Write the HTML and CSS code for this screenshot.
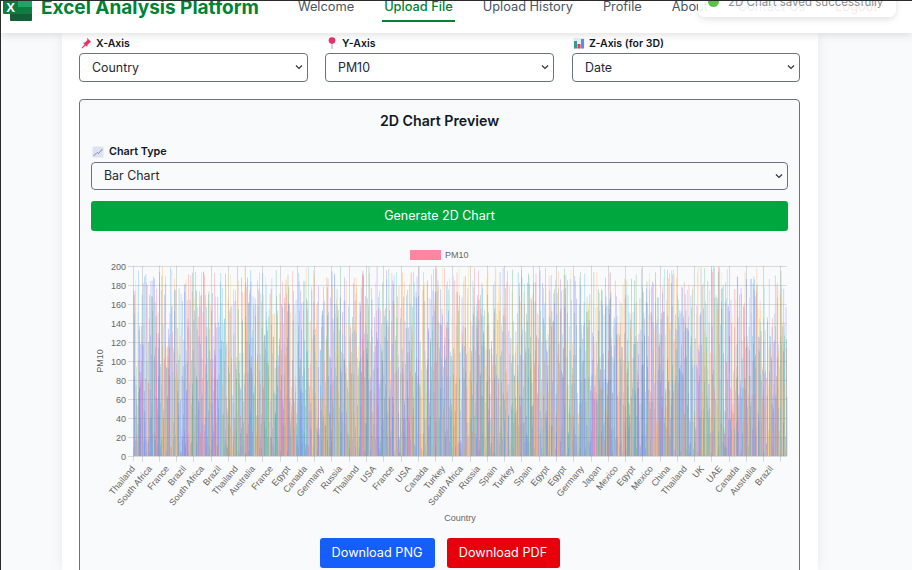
FILE: index.html
```html
<!DOCTYPE html>
<html lang="en">
<head>
<meta charset="utf-8">
<title>Excel Analysis Platform</title>
<link rel="stylesheet" href="styles.css">
</head>
<body>
<div class="page">
  <header class="topbar">
    <div class="brand">
      <svg class="logo" viewBox="0 0 30 33" aria-hidden="true">
        <rect x="7" y="0" width="22" height="19" fill="#21a366"/>
        <rect x="7" y="19" width="22" height="7" fill="#107c41"/>
        <path d="M7 26h22v6a1 1 0 0 1-1 1H8a1 1 0 0 1-1-1z" fill="#185c37"/>
        <rect x="0" y="0" width="15" height="26" rx="1" fill="#0f7b3f"/>
        <text x="7.5" y="24" class="logo-x">X</text>
      </svg>
      <span class="brand-name">Excel Analysis Platform</span>
    </div>
    <nav class="nav">
      <a class="nav-link">Welcome</a>
      <a class="nav-link active">Upload File</a>
      <a class="nav-link">Upload History</a>
      <a class="nav-link">Profile</a>
      <a class="nav-link">About</a>
      <a class="nav-link">Contact Us</a>
      <a class="nav-link logout">Logout</a>
    </nav>
  </header>
  <div class="toast">
    <span class="toast-dot"></span>
    <span class="toast-text">2D Chart saved successfully</span>
  </div>
  <main class="card">
    <div class="axis-row">
      <div class="field">
        <label class="field-label">
          <svg class="ico" viewBox="0 0 12 12" aria-hidden="true"><path d="M7 .8l4.2 4.2-1.3.5-2.4 2.4-.3 2-1.6-1.5-3.4 3-.6-.6 3-3.4L3 5.8l2-.3 2.4-2.4z" fill="#e8336b"/></svg>
          X-Axis
        </label>
        <select class="select"><option>Country</option></select>
      </div>
      <div class="field">
        <label class="field-label">
          <svg class="ico" viewBox="0 0 12 12" aria-hidden="true"><rect x="5.6" y="5" width=".9" height="7" fill="#9aa0a6"/><circle cx="6" cy="3.6" r="3.3" fill="#e8336b"/></svg>
          Y-Axis
        </label>
        <select class="select"><option>PM10</option></select>
      </div>
      <div class="field field-last">
        <label class="field-label">
          <svg class="ico" viewBox="0 0 12 12" aria-hidden="true"><rect x=".5" y="1" width="11" height="10.5" fill="#e9edf2"/><rect x="1" y="4" width="3" height="7.5" fill="#2f9e8f"/><rect x="4.5" y="7" width="3" height="4.5" fill="#e8336b"/><rect x="8" y="2" width="3" height="9.5" fill="#5b8def"/></svg>
          Z-Axis (for 3D)
        </label>
        <select class="select"><option>Date</option></select>
      </div>
    </div>
    <section class="panel">
      <h2 class="panel-title">2D Chart Preview</h2>
      <label class="field-label field-label-wide">
        <svg class="ico" viewBox="0 0 12 12" aria-hidden="true"><rect x=".5" y=".5" width="11" height="11" fill="#dfe1ee"/><path d="M1.5 10L5 6.5l1.5 1L10.5 3" fill="none" stroke="#6d8fd0" stroke-width="1"/></svg>
        Chart Type
      </label>
      <select class="select select-plain"><option>Bar Chart</option></select>
      <button class="btn btn-green btn-wide">Generate 2D Chart</button>
      <div class="chart" id="chart"></div>
      <div class="actions">
        <button class="btn btn-blue">Download PNG</button>
        <button class="btn btn-red">Download PDF</button>
      </div>
    </section>
  </main>
</div>
<script src="chart.js"></script>
</body>
</html>
```
FILE: styles.css
```css
* { box-sizing: border-box; }
html, body { margin: 0; padding: 0; height: 100%; overflow: hidden; }
body { font-family: "Inter", "Noto Sans", sans-serif; background: #f9fafb; color: #101828; }
.page {
  position: relative;
  height: 570px;
  overflow: hidden;
  border-top: 1px solid #2b2b2b;
  border-left: 1px solid #2b2b2b;
}
.topbar {
  position: relative;
  z-index: 2;
  height: 32px;
  display: flex;
  align-items: flex-start;
  background: #fff;
  padding-left: 2px;
  box-shadow: 0 2px 8px rgba(0, 0, 0, .12);
}
.brand { display: flex; align-items: flex-start; margin-top: -13px; }
.logo { width: 30px; height: 33px; flex: none; }
.logo-x { font: 700 13px "Liberation Sans", sans-serif; fill: #fff; text-anchor: middle; }
.brand-name {
  margin-left: 8px;
  margin-top: 8px;
  font-size: 19px;
  line-height: 24px;
  font-weight: 700;
  color: #008236;
  white-space: nowrap;
}
.nav { display: flex; margin-left: 37px; margin-top: -3px; }
.nav-link {
  display: block;
  padding: 0 2px 4px;
  margin-right: 26px;
  font-size: 12.8px;
  line-height: 18px;
  color: #4a5565;
  white-space: nowrap;
  border-bottom: 2px solid transparent;
}
.nav-link.active { color: #008236; font-weight: 500; border-bottom-color: #008236; }
.nav-link.logout { color: #e7000b; }
.toast {
  position: absolute;
  z-index: 3;
  top: -15px;
  left: 697px;
  width: 198px;
  height: 31px;
  display: flex;
  align-items: center;
  gap: 9px;
  padding-left: 10px;
  background: rgba(255, 255, 255, .9);
  border-radius: 7px;
  box-shadow: 0 2px 7px rgba(0, 0, 0, .13);
}
.toast-dot { width: 11px; height: 11px; border-radius: 50%; background: #5cc04a; flex: none; }
.toast-text { font-size: 11.5px; color: #8a8f98; white-space: nowrap; }
.card {
  width: 756px;
  margin-left: 61px;
  height: 537px;
  padding: 0 18px 0 17px;
  background: #fff;
  box-shadow: 0 0 12px rgba(0, 0, 0, .07);
}
.axis-row { display: grid; grid-template-columns: 229px 229px 229px; column-gap: 17px; padding-top: 3px; }
.field-last { margin-left: 1px; }
.field-label {
  display: flex;
  align-items: center;
  gap: 4px;
  height: 14px;
  font-size: 10.5px;
  font-weight: 600;
  color: #101828;
  margin-bottom: 3px;
  white-space: nowrap;
}
.field-label-wide { font-size: 10.8px; gap: 5px; }
.ico { width: 12px; height: 12px; flex: none; margin-left: 1px; }
.select {
  display: block;
  width: 100%;
  height: 28.5px;
  padding: 0 8px 0 12px;
  font: 400 12.4px "Inter", "Noto Sans", sans-serif;
  color: #1e2939;
  background-color: #fff;
  background-image: url("data:image/svg+xml,%3Csvg xmlns='http://www.w3.org/2000/svg' width='8' height='6' viewBox='0 0 8 6'%3E%3Cpath d='M1 1.5l3 3 3-3' fill='none' stroke='%23333' stroke-width='1.2'/%3E%3C/svg%3E");
  background-repeat: no-repeat;
  background-position: right 4px center;
  appearance: none;
  border: 1px solid #6a7282;
  border-radius: 4px;
}
.select-plain { height: 28px; background-color: #f9fafb; }
.panel {
  margin-top: 17px;
  padding: 13px 11px 0;
  height: 480px;
  background: #f9fafb;
  border: 1px solid #6a7282;
  border-radius: 4px;
}
.panel-title {
  margin: 0 0 16px;
  font-size: 14.2px;
  line-height: 16px;
  font-weight: 600;
  color: #101828;
  text-align: center;
}
.btn {
  height: 30px;
  border: 0;
  border-radius: 3px;
  font: 400 12.7px "Inter", "Noto Sans", sans-serif;
  color: #fff;
  text-align: center;
  padding: 0;
}
.btn-wide { display: block; width: 100%; margin-top: 11px; font-size: 12.5px; }
.btn-green { background: #00a63e; }
.btn-blue { background: #155dfc; width: 115px; }
.btn-red { background: #e7000b; width: 113px; }
.chart { margin-top: 9px; height: 298px; }
.chart svg { display: block; }
.actions { display: flex; justify-content: center; gap: 12px; }
.tick-text { font: 9px "Liberation Sans", Arial, sans-serif; fill: #666; }
```
FILE: chart.js
```js
(function () {
  var NS = 'http://www.w3.org/2000/svg';
  var W = 697, H = 298;
  var L = 42, R = 696, T = 26, B = 216;
  var svg = document.createElementNS(NS, 'svg');
  svg.setAttribute('width', W);
  svg.setAttribute('height', H);
  svg.setAttribute('viewBox', '0 0 ' + W + ' ' + H);

  function el(name, attrs, text) {
    var n = document.createElementNS(NS, name);
    for (var k in attrs) n.setAttribute(k, attrs[k]);
    if (text) n.textContent = text;
    svg.appendChild(n);
    return n;
  }
  function line(x1, y1, x2, y2) {
    el('line', { x1: x1, y1: y1, x2: x2, y2: y2, stroke: 'rgba(0,0,0,.13)', 'stroke-width': 1 });
  }

  var labels = ['Thailand', 'South Africa', 'France', 'Brazil', 'South Africa', 'Brazil', 'Thailand', 'Australia', 'France', 'Egypt', 'Canada', 'Germany', 'Russia', 'Thailand', 'USA', 'France', 'USA', 'Canada', 'Turkey', 'South Africa', 'Russia', 'Spain', 'Turkey', 'Spain', 'Egypt', 'Egypt', 'Germany', 'Japan', 'Mexico', 'Egypt', 'Mexico', 'China', 'Thailand', 'UK', 'UAE', 'Canada', 'Australia', 'Brazil'];
  var step = 17.27, first = L + 8.5;

  for (var g = 0; g <= 10; g++) {
    var y = B - g * 19 + 0.5;
    line(L - 5, y, R, y);
    el('text', { x: L - 7, y: y + 3, 'text-anchor': 'end', 'class': 'tick-text' }, String(g * 20));
  }
  line(L + 0.5, T, L + 0.5, B + 5);
  labels.forEach(function (name, idx) {
    var x = Math.round(first + idx * step) + 0.5;
    line(x, T, x, B + 6);
    var ax = x - 7, ay = B + 13;
    el('text', { x: ax, y: ay, 'text-anchor': 'end', 'class': 'tick-text', transform: 'rotate(-50 ' + ax + ' ' + ay + ')' }, name);
  });

  // seeded random so the picture is stable
  var s = 20240611;
  function rnd() {
    s = (s + 0x6D2B79F5) | 0;
    var t = Math.imul(s ^ (s >>> 15), 1 | s);
    t = (t + Math.imul(t ^ (t >>> 7), 61 | t)) ^ t;
    return ((t ^ (t >>> 14)) >>> 0) / 4294967296;
  }
  var colors = ['255,99,132', '54,162,235', '255,206,86', '75,192,192', '130,100,255', '255,159,64', '90,110,240', '70,160,110'];
  var N = 2600, bw = (R - L) / N;
  for (var i = 0; i < N; i++) {
    var h = rnd() * (B - T);
    var c = colors[Math.floor(rnd() * colors.length)];
    el('rect', {
      x: (L + i * bw).toFixed(2), y: (B - h).toFixed(2),
      width: 0.6, height: h.toFixed(2),
      fill: 'rgba(' + c + ',.48)'
    });
  }

  el('rect', { x: 319, y: 10, width: 31, height: 10, fill: '#ff85a0' });
  el('text', { x: 354, y: 18, 'class': 'tick-text' }, 'PM10');
  el('text', { x: 369, y: 281, 'text-anchor': 'middle', 'class': 'tick-text' }, 'Country');
  el('text', { x: 12, y: 121, 'text-anchor': 'middle', 'class': 'tick-text', transform: 'rotate(-90 12 121)' }, 'PM10');

  document.getElementById('chart').appendChild(svg);
})();
```
